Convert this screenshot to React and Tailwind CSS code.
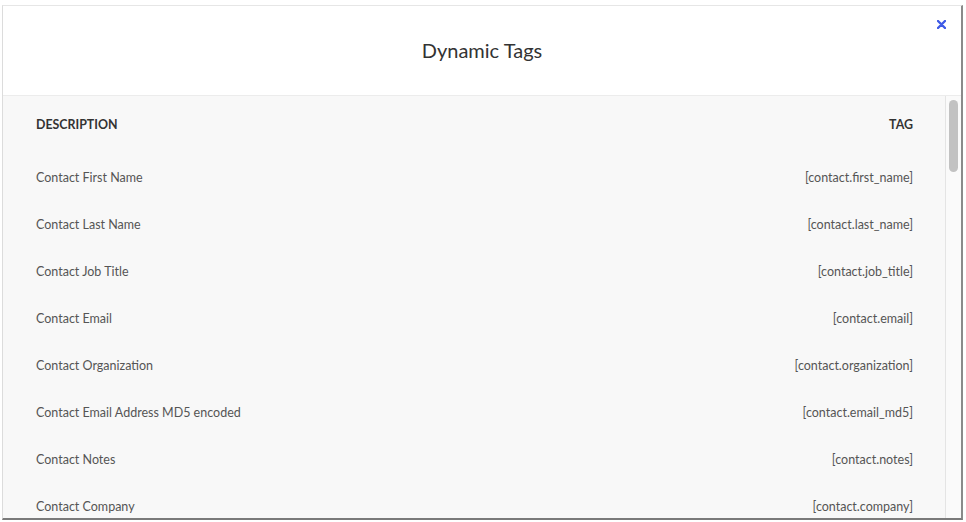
import React from "react";

const rows = [
  ["Contact First Name", "[contact.first_name]"],
  ["Contact Last Name", "[contact.last_name]"],
  ["Contact Job Title", "[contact.job_title]"],
  ["Contact Email", "[contact.email]"],
  ["Contact Organization", "[contact.organization]"],
  ["Contact Email Address MD5 encoded", "[contact.email_md5]"],
  ["Contact Notes", "[contact.notes]"],
  ["Contact Company", "[contact.company]"],
];

export default function App() {
  return (
    <div
      className="w-[966px] h-[522px] bg-white pt-[5px] pl-[2px] overflow-hidden"
      style={{ fontFamily: "Lato, 'Open Sans', sans-serif" }}
    >
      <div className="relative w-[961px] h-[515px] flex flex-col border-t border-l border-t-[#e6e6e6] border-l-[#dcdcdc] border-r-2 border-b-2 border-r-[#8a8a8a] border-b-[#7a7a7a] overflow-hidden">
        <div className="h-[90px] shrink-0 flex items-center justify-center bg-white border-b border-[#ececec]">
          <h1 className="text-[20px] leading-none text-[#333] mb-[1px]">Dynamic Tags</h1>
        </div>
        <button className="absolute top-[12px] right-[14px] w-[12px] h-[12px] flex items-center justify-center">
          <svg width="9" height="9" viewBox="0 0 9 9">
            <path d="M1 1 L8 8 M8 1 L1 8" stroke="#3f5be6" strokeWidth="2.4" strokeLinecap="round" />
          </svg>
        </button>
        <div className="flex-1 flex bg-[#f8f8f8] min-h-0">
          <div className="flex-1 pl-[33px] pr-[32px] overflow-hidden">
            <div className="h-[59px] pt-[22px] flex justify-between text-[12.4px] leading-[14px] font-bold text-[#333]">
              <span>DESCRIPTION</span>
              <span>TAG</span>
            </div>
            {rows.map(([d, t]) => (
              <div key={t} className="h-[47px] flex items-center justify-between text-[12.5px] text-[#555]">
                <span>{d}</span>
                <span>{t}</span>
              </div>
            ))}
          </div>
          <div className="w-[16px] shrink-0 border-l border-[#e4e4e4] bg-[#fafafa] pt-[4px] flex justify-center">
            <div className="w-[9px] h-[72px] rounded-full bg-[#c2c2c2]" />
          </div>
        </div>
      </div>
    </div>
  );
}
